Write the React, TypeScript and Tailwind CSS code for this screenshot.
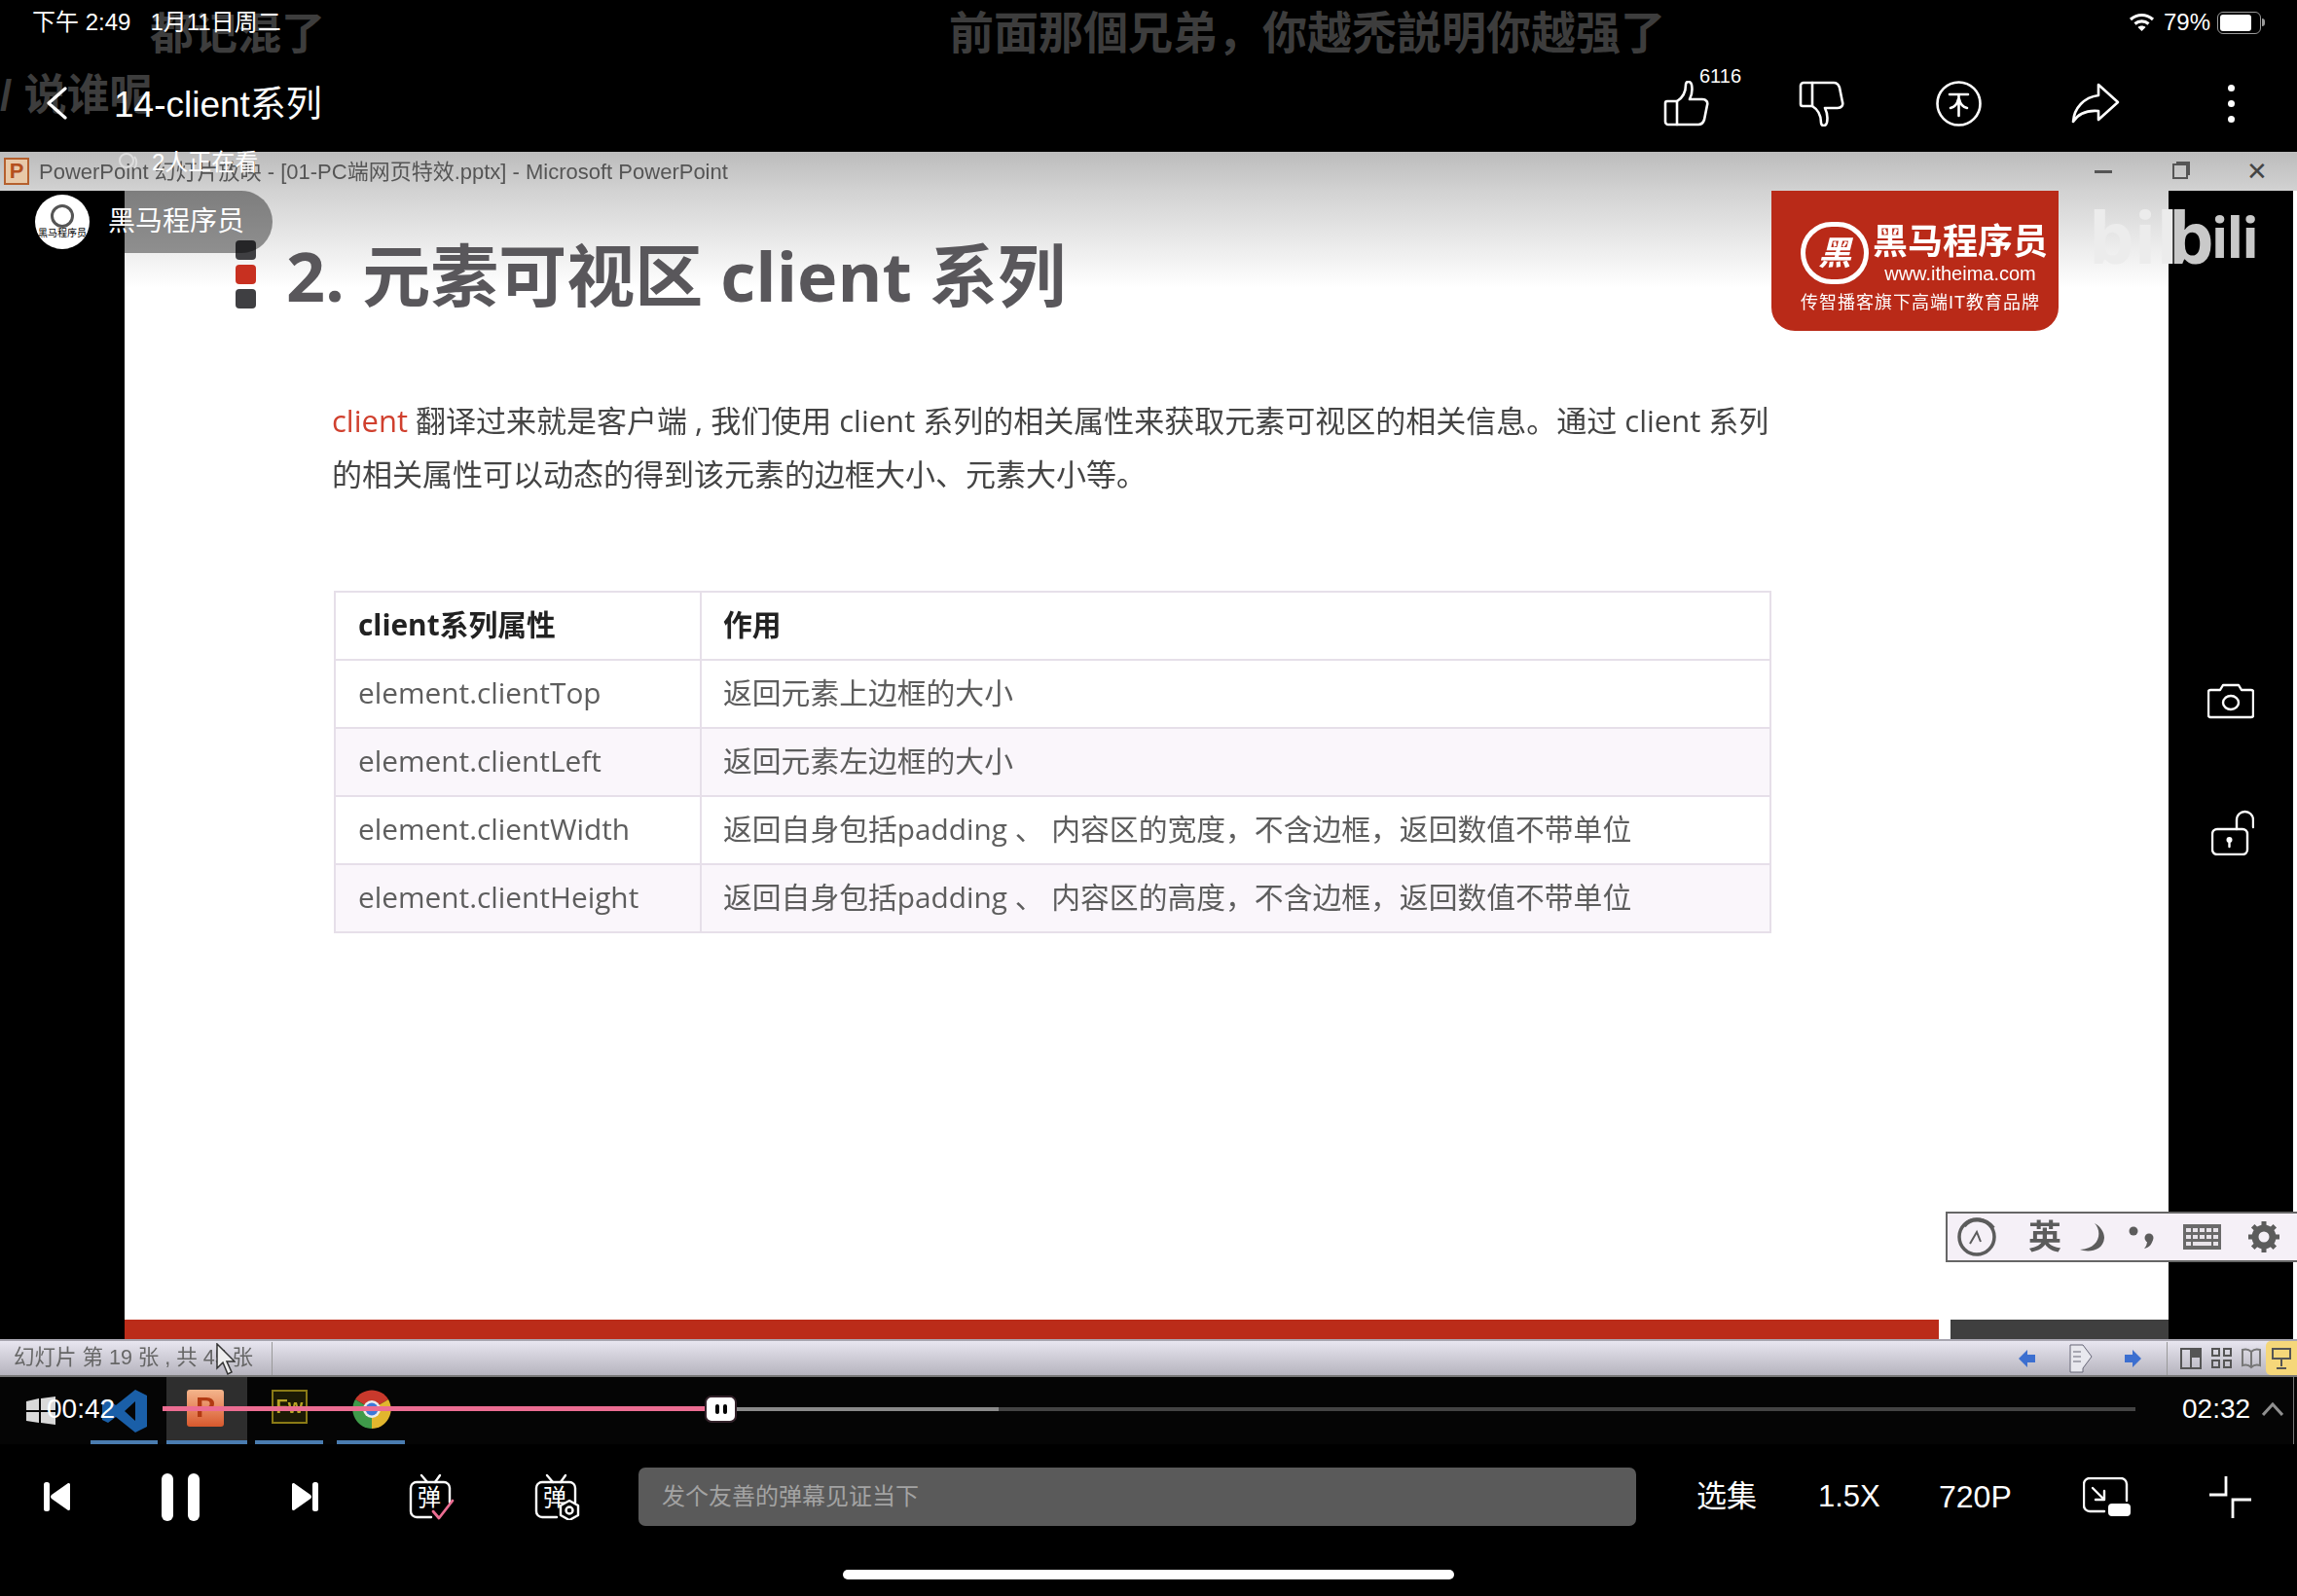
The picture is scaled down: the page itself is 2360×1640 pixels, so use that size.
const rows = [
  { name: 'element.clientTop', desc: '返回元素上边框的大小', tint: false },
  { name: 'element.clientLeft', desc: '返回元素左边框的大小', tint: true },
  { name: 'element.clientWidth', desc: '返回自身包括padding 、 内容区的宽度，不含边框，返回数值不带单位', tint: false },
  { name: 'element.clientHeight', desc: '返回自身包括padding 、 内容区的高度，不含边框，返回数值不带单位', tint: true },
];

function Like({ flip = false }: { flip?: boolean }) {
  return (
    <svg width="47" height="47" viewBox="0 0 47 47" fill="none" stroke="white" strokeWidth="2.6" strokeLinejoin="round" strokeLinecap="round" className={flip ? '-scale-y-100' : ''}>
      <path d="M4 21h10v24H5a3 3 0 0 1-3-3V23a2 2 0 0 1 2-2z" />
      <path d="M14 21c5-3 9-9 9-17 0-4 5-4 6 0 1 5 0 11-2 15h13c4 0 6 3 5 6l-3 15c-1 3-3 5-6 5H14" />
    </svg>
  );
}

function Coin() {
  return (
    <svg width="47" height="47" viewBox="0 0 47 47" fill="none" stroke="white" strokeWidth="2.6" strokeLinecap="round">
      <circle cx="23.5" cy="23.5" r="22" />
      <path d="M14 14h19M23.5 14v22M23 19c-1 5-4 8-8 9M24 19c1 5 4 8 8 9" />
    </svg>
  );
}

function Share() {
  return (
    <svg width="50" height="42" viewBox="0 0 50 42" fill="none" stroke="white" strokeWidth="2.6" strokeLinejoin="round">
      <path d="M28 2l20 18-20 18V29C16 28 7 32 2 40c1-14 11-25 26-27z" />
    </svg>
  );
}

function Wifi() {
  return (
    <svg width="27" height="20" viewBox="0 0 27 20" fill="none" stroke="white" strokeWidth="3.2">
      <path d="M2 7c7-6 16-6 23 0M6.500 11.500c4-3.500 10-3.500 14 0" />
      <path d="M13.500 19l-4-4c2-2 6-2 8 0z" fill="white" stroke="none" />
    </svg>
  );
}

function DanmakuIcon({ glyph, badge }: { glyph: string; badge: 'check' | 'gear' }) {
  return (
    <div className="relative w-[48px] h-[48px]">
      <svg width="48" height="48" viewBox="0 0 48 48" fill="none" stroke="white" strokeWidth="2.4" strokeLinecap="round" strokeLinejoin="round">
        <path d="M14 2l6 7M33 2l-5 7" />
        <path d="M24 45H9a6 6 0 0 1-6-6V15a6 6 0 0 1 6-6h28a6 6 0 0 1 6 6v15" />
        {badge === 'check' ? (
          <path d="M26 39l6 7 14-18" stroke="#ec6d92" strokeWidth="2.8" />
        ) : (
          <>
            <path d="M37 28l9 5v10l-9 5-9-5V33z" fill="black" />
            <circle cx="37" cy="38" r="3.500" />
          </>
        )}
      </svg>
      <span className="absolute left-[10px] top-[11px] text-[24px] leading-[28px] text-white">{glyph}</span>
    </div>
  );
}

function TaskIcons() {
  return (
    <div className="absolute inset-0 flex blur-[0.5px]">
      <div className="w-[93px] pl-[27px] pt-[20px]">
        <svg width="30" height="29" viewBox="0 0 30 29" fill="#d9d9d9">
          <path d="M0 5l13-3v12H0zM15 2l15-2v14H15zM0 16h13v11L0 25zM15 16h15v13l-15-2z" />
        </svg>
      </div>
      <div className="w-[78px] pl-[12px] pt-[13px] relative">
        <svg width="46" height="44" viewBox="0 0 46 44">
          <path d="M34 0l12 6v32l-12 6-20-16-8 6-6-3V13l6-3 8 6zM34 12l-11 10 11 10z" fill="#1a5fa8" />
        </svg>
        <div className="absolute left-0 right-[9px] bottom-0 h-[4px] bg-[#4a7cb0]" />
      </div>
      <div className="w-[83px] bg-[#2e2e2e] relative pl-[21px] pt-[13px]">
        <div className="w-[38px] h-[38px] rounded-[3px] bg-gradient-to-b from-[#f3b58c] to-[#d7582c] text-[#b23a12] font-bold text-[30px] leading-[36px] text-center">P</div>
        <div className="absolute left-0 right-0 bottom-0 h-[4px] bg-[#4a7cb0]" />
      </div>
      <div className="w-[92px] relative pl-[25px] pt-[13px]">
        <div className="w-[37px] h-[35px] border-2 border-[#8a7a16] bg-[#1c1a04] text-[#b8a326] font-bold text-[20px] leading-[30px] text-center">Fw</div>
        <div className="absolute left-[8px] w-[70px] bottom-0 h-[4px] bg-[#4a7cb0]" />
      </div>
      <div className="relative pl-[16px] pt-[13px] w-[70px]">
        <svg width="40" height="40" viewBox="0 0 40 40">
          <path d="M20 20L3 10A20 20 0 0 1 37 10z" fill="#c9392c" />
          <path d="M20 20L3 10A20 20 0 0 0 20 40z" fill="#3f9a4a" />
          <path d="M20 20L37 10A20 20 0 0 1 20 40z" fill="#e2b62e" />
          <circle cx="20" cy="20" r="9" fill="#ececec" />
          <circle cx="20" cy="20" r="6.500" fill="#3d78d8" />
        </svg>
        <div className="absolute left-0 right-0 bottom-0 h-[4px] bg-[#4a7cb0]" />
      </div>
    </div>
  );
}

function Slide() {
  return (
    <div className="flex-1 flex flex-col bg-[linear-gradient(#d2d2d2,#ffffff_100px)] text-[#444]">
      <div className="h-[144px] flex items-start blur-[0.6px]">
        <div className="flex-1 flex items-start pl-[114px]">
          <div className="flex flex-col gap-[5px] mt-[51px]">
            <div className="w-[21px] h-[20px] rounded-[4px] bg-[#3f3f42]" />
            <div className="w-[21px] h-[20px] rounded-[4px] bg-[#c83020]" />
            <div className="w-[21px] h-[20px] rounded-[4px] bg-[#3f3f42]" />
          </div>
          <h1 className="ml-[31px] mt-[42px] text-[70px] leading-[90px] font-bold text-[#59575b] whitespace-nowrap font-['Open_Sans','Noto_Sans_CJK_SC',sans-serif]">
            2. 元素可视区 client 系列
          </h1>
        </div>
        <div className="w-[295px] h-[144px] mr-[113px] rounded-b-[24px] bg-[#b92a18] flex flex-col pl-[30px] text-white">
          <div className="flex items-start mt-[32px]">
            <div className="w-[70px] h-[64px] rounded-full border-[5px] border-white flex items-center justify-center text-[34px] font-bold italic shrink-0">黑</div>
            <div className="flex flex-col items-center ml-[2px] w-[184px]">
              <span className="text-[36px] leading-[42px] font-bold whitespace-nowrap">黑马程序员</span>
              <span className="text-[20px] leading-[22px] font-['Liberation_Sans',sans-serif]">www.itheima.com</span>
            </div>
          </div>
          <span className="text-[18px] leading-[20px] mt-[9px] tracking-[1px] whitespace-nowrap">传智播客旗下高端IT教育品牌</span>
        </div>
      </div>

      <p className="mt-[65px] ml-[213px] w-[1490px] text-[31px] leading-[55px] whitespace-nowrap blur-[0.5px] font-['Open_Sans','Noto_Sans_CJK_SC',sans-serif]">
        <span className="text-[#d0402e]">client</span> 翻译过来就是客户端 , 我们使用 client 系列的相关属性来获取元素可视区的相关信息。通过 client 系列
        <br />
        的相关属性可以动态的得到该元素的边框大小、元素大小等。
      </p>

      <div className="mt-[92px] ml-[215px] w-[1477px] border-2 border-[#e6dfe9] text-[29.8px] text-[#5d5d5d] font-['Open_Sans','Noto_Sans_CJK_SC',sans-serif]">
        <div className="grid grid-cols-[376px_1fr] h-[68px] items-stretch font-bold text-[#222]">
          <div className="pl-[23px] pb-[2px] flex items-center border-r-2 border-[#e6dfe9] blur-[0.4px]">client系列属性</div>
          <div className="pl-[22px] pb-[2px] flex items-center blur-[0.4px]">作用</div>
        </div>
        {rows.map(r => (
          <div key={r.name} className={`grid grid-cols-[376px_1fr] h-[70px] border-t-2 border-[#e6dfe9] ${r.tint ? 'bg-[#faf6fb]' : 'bg-white'}`}>
            <div className="pl-[23px] pb-[2px] flex items-center border-r-2 border-[#e6dfe9]"><span className="blur-[0.4px]">{r.name}</span></div>
            <div className="pl-[22px] pb-[2px] flex items-center whitespace-nowrap"><span className="blur-[0.4px]">{r.desc}</span></div>
          </div>
        ))}
      </div>

      <div className="flex-1" />
      <div className="h-[20px] flex gap-[12px]">
        <div className="w-[1864px] bg-[#bb2c19]" />
        <div className="flex-1 bg-[#3f3f3f]" />
      </div>
    </div>
  );
}

function ImeBar() {
  return (
    <div className="absolute right-0 top-[1245px] w-[361px] h-[52px] border-2 border-r-0 border-[#666] bg-[#f5f0f7] flex items-center pl-[9px] text-[#5c5c5c] blur-[0.4px]">
      <svg width="44" height="42" viewBox="0 0 44 42" fill="none" stroke="#5c5c5c">
        <circle cx="21" cy="21" r="18" strokeWidth="3.500" />
        <path d="M14 28l7-12 4 10" strokeWidth="2" />
        <path d="M8 10C14 1 30 1 38 12" strokeWidth="4" />
      </svg>
      <span className="ml-[30px] text-[34px] leading-none font-bold">英</span>
      <svg className="ml-[17px]" width="28" height="30" viewBox="0 0 28 30" fill="#5c5c5c">
        <path d="M17 1c8 8 6 26-15 27 8 3 24 2 25-12 0-6-4-12-10-15z" />
      </svg>
      <svg className="ml-[23px]" width="28" height="28" viewBox="0 0 28 28" fill="#5c5c5c">
        <circle cx="6" cy="8" r="4.500" />
        <circle cx="22" cy="15" r="4.500" />
        <path d="M26 15c0 6-4 10-9 11 2-2 3-5 3-8z" />
      </svg>
      <svg className="ml-[29px]" width="39" height="26" viewBox="0 0 39 26">
        <rect width="39" height="26" fill="#6a6a6a" />
        <path d="M3 4h5v4H3zM10 4h5v4h-5zM17 4h5v4h-5zM24 4h5v4h-5zM31 4h5v4h-5zM3 11h5v4H3zM10 11h5v4h-5zM17 11h5v4h-5zM24 11h5v4h-5zM31 11h5v4h-5zM3 18h5v4H3zM10 18h19v4H10zM31 18h5v4h-5z" fill="#e8e4ea" />
      </svg>
      <svg className="ml-[27px]" width="34" height="34" viewBox="0 0 34 34" fill="none" stroke="#5c5c5c">
        <circle cx="17" cy="17" r="9" strokeWidth="7" />
        <path d="M17 1v6M17 27v6M1 17h6M27 17h6M5.700 5.700l4.300 4.300M24 24l4.300 4.300M5.700 28.300l4.300-4.300M24 10l4.300-4.300" strokeWidth="5" />
      </svg>
    </div>
  );
}

export default function App() {
  return (
    <div className="relative w-[2360px] h-[1640px] overflow-hidden bg-black text-white font-['Liberation_Sans','Noto_Sans_CJK_SC',sans-serif]">
      {/* top bar */}
      <div className="relative h-[156px]">
        <div className="absolute left-[154px] top-[8px] text-[45px] leading-[56px] font-bold text-[#3d3d3d] whitespace-nowrap">都记混了</div>
        <div className="absolute left-[975px] top-[6px] text-[46px] leading-[56px] font-bold text-[#3d3d3d] whitespace-nowrap">前面那個兄弟，你越禿説明你越强了</div>
        <div className="absolute left-0 top-[70px] text-[44px] leading-[56px] font-bold text-[#3d3d3d] whitespace-nowrap">/ 说谁呢</div>

        <div className="relative h-[46px] flex items-center pl-[33px] pr-[33px] text-[24px]">
          <span>下午 2:49</span>
          <span className="ml-[20px]">1月11日周二</span>
          <div className="flex-1" />
          <Wifi />
          <span className="ml-[9px]">79%</span>
          <div className="ml-[7px] w-[45px] h-[23px] rounded-[6px] border border-[#9a9a9a] p-[2px]">
            <div className="w-[32px] h-full rounded-[3px] bg-white" />
          </div>
          <div className="w-[3px] h-[8px] bg-[#9a9a9a] rounded-r-sm ml-[1px]" />
        </div>

        <div className="relative h-[110px] pt-[10px] flex items-center">
          <svg className="ml-[47px]" width="22" height="34" viewBox="0 0 22 34" fill="none" stroke="white" strokeWidth="3.200" strokeLinecap="round" strokeLinejoin="round">
            <path d="M20 2L3 17l17 15" />
          </svg>
          <span className="ml-[48px] mt-[3px] text-[37px] leading-none whitespace-nowrap">14-client系列</span>
          <div className="flex-1" />
          <div className="relative">
            <Like />
            <span className="absolute left-[37px] top-[-15px] text-[20px] leading-none">6116</span>
          </div>
          <div className="ml-[92px]"><Like flip /></div>
          <div className="ml-[94px]"><Coin /></div>
          <div className="ml-[92px]"><Share /></div>
          <div className="ml-[111px] mr-[64px] flex flex-col gap-[9px]">
            <div className="w-[7px] h-[7px] rounded-full bg-white" />
            <div className="w-[7px] h-[7px] rounded-full bg-white" />
            <div className="w-[7px] h-[7px] rounded-full bg-white" />
          </div>
        </div>
      </div>

      {/* video frame */}
      <div className="h-[1328px] flex flex-col">
        <div className="h-[40px] bg-gradient-to-b from-[#bcbcbc] to-[#d2d2d2] flex items-center text-[#555] text-[22px] pl-[4px] pr-[30px] whitespace-nowrap">
          <div className="w-[26px] h-[28px] bg-[#e8c9a8] border-2 border-[#b5602e] text-[#b5501e] font-bold text-[22px] leading-[24px] text-center">P</div>
          <span className="ml-[10px] blur-[0.4px]">PowerPoint 幻灯片放映 - [01-PC端网页特效.pptx] - Microsoft PowerPoint</span>
          <div className="flex-1" />
          <div className="w-[18px] h-[3px] bg-[#555]" />
          <div className="ml-[62px] w-[16px] h-[16px] border-2 border-[#555] shadow-[3px_-3px_0_-1px_#555]" />
          <span className="ml-[60px] text-[26px] leading-none text-[#444]">✕</span>
        </div>

        <div className="h-[1180px] flex">
          <div className="w-[128px] bg-black" />
          <Slide />
          <div className="w-[128px] bg-black flex flex-col items-center">
            <svg className="mt-[506px]" width="48" height="37" viewBox="0 0 48 37" fill="none" stroke="white" strokeWidth="2.400" strokeLinejoin="round">
              <path d="M3 7h10l3-5h16l3 5h10a2 2 0 0 1 2 2v24a2 2 0 0 1-2 2H3a2 2 0 0 1-2-2V9a2 2 0 0 1 2-2z" />
              <ellipse cx="24" cy="20" rx="8" ry="7" />
            </svg>
            <svg className="mt-[93px] ml-[3px]" width="44" height="47" viewBox="0 0 44 47" fill="none" stroke="white" strokeWidth="2.400" strokeLinecap="round">
              <path d="M6 20h26a5 5 0 0 1 5 5v16a5 5 0 0 1-5 5H6a5 5 0 0 1-5-5V25a5 5 0 0 1 5-5z" />
              <path d="M26 20v-9c0-12 17-12 17 0v7" />
              <circle cx="18.500" cy="31" r="3" fill="white" stroke="none" />
              <path d="M18.500 32v6" />
            </svg>
          </div>
          <div className="w-[4px] bg-white" />
        </div>

        <div className="h-[39px] flex items-center bg-gradient-to-b from-[#e8e6f0] to-[#b6b4be] border-t-2 border-b-2 border-t-[#a8a6b0] border-b-[#777] text-[#666] text-[21.5px] whitespace-nowrap pl-[14px]">
          <span className="w-[265px] blur-[0.4px]">幻灯片 第 19 张 , 共 45 张</span>
          <div className="w-[1px] h-[34px] bg-[#999]" />
          <div className="flex-1" />
          <svg width="17" height="20" viewBox="0 0 17 20" fill="#3c6fd0"><path d="M0 10l9-9v5h8v8H9v5z" /></svg>
          <svg className="ml-[35px]" width="25" height="30" viewBox="0 0 25 30" fill="#e8e8ee" stroke="#667">
            <path d="M1 1h13l9 12-9 12v4H1z" />
            <path d="M4 8h8M4 13h8M4 18h8" />
          </svg>
          <svg className="ml-[32px]" width="17" height="20" viewBox="0 0 17 20" fill="#3c6fd0"><path d="M17 10l-9-9v5H0v8h8v5z" /></svg>
          <div className="ml-[26px] w-[1px] h-[34px] bg-[#999]" />
          <svg className="ml-[13px]" width="22" height="22" viewBox="0 0 22 22" fill="none" stroke="#555" strokeWidth="2"><path d="M1 1h20v20H1zM11 1v20" /><path d="M13 3h6v6h-6z" fill="#555" /></svg>
          <svg className="ml-[10px]" width="21" height="21" viewBox="0 0 21 21" fill="none" stroke="#555" strokeWidth="2"><path d="M1 1h7v7H1zM13 1h7v7h-7zM1 13h7v7H1zM13 13h7v7h-7z" /></svg>
          <svg className="ml-[10px]" width="20" height="24" viewBox="0 0 20 24" fill="none" stroke="#777" strokeWidth="2"><path d="M10 5C7 2 4 2 1 3v16c3-1 6-1 9 2 3-3 6-3 9-2V3c-3-1-6-1-9 2zM10 5v16" /></svg>
          <div className="ml-[5px] w-[32px] h-[35px] rounded-l-[5px] bg-[#f5d77a] flex items-center justify-center">
            <svg width="22" height="24" viewBox="0 0 22 24" fill="none" stroke="#555" strokeWidth="2"><path d="M2 2h18v10H2zM11 12v8M6 22h10" /></svg>
          </div>
        </div>

        <div className="relative h-[69px] bg-[#050505]">
          <TaskIcons />
          <div className="absolute right-[3px] top-0 bottom-0 w-[1px] bg-[#777]" />
          <div className="absolute inset-0 flex items-center pl-[48px] pb-[4px]">
            <span className="w-[119px] text-[28px] leading-none">00:42</span>
            <div className="w-[557px] h-[5px] bg-[#ec6d92]" />
            <div className="w-[33px] h-[28px] rounded-[7px] bg-white border-2 border-[#33222a] flex items-center justify-center gap-[4px]">
              <div className="w-[4px] h-[10px] rounded-sm bg-black" />
              <div className="w-[4px] h-[10px] rounded-sm bg-black" />
            </div>
            <div className="w-[269px] h-[4px] bg-[#8a8a8a]" />
            <div className="w-[1168px] h-[4px] bg-[#444]" />
            <span className="ml-[48px] text-[28px] leading-none">02:32</span>
            <svg className="ml-[12px]" width="22" height="14" viewBox="0 0 22 14" fill="none" stroke="#8f8f8f" strokeWidth="3"><path d="M1 13L11 2l10 11" /></svg>
          </div>
        </div>
      </div>

      {/* bottom controls */}
      <div className="h-[108px] flex items-center pl-[45px]">
        <svg width="27" height="30" viewBox="0 0 27 30" fill="white"><rect width="6" height="30" rx="2.500" /><path d="M25 1a1.500 1.500 0 0 1 2 1.500v25a1.500 1.500 0 0 1-2 1.500L8 17a2.500 2.500 0 0 1 0-4z" /></svg>
        <div className="ml-[94px] flex gap-[15px]">
          <div className="w-[12px] h-[49px] rounded-full bg-white" />
          <div className="w-[12px] h-[49px] rounded-full bg-white" />
        </div>
        <svg className="ml-[95px]" width="27" height="30" viewBox="0 0 27 30" fill="white"><rect x="21" width="6" height="30" rx="2.500" /><path d="M2 1a1.500 1.500 0 0 0-2 1.500v25a1.500 1.500 0 0 0 2 1.500L19 17a2.500 2.500 0 0 0 0-4z" /></svg>
        <div className="ml-[92px]"><DanmakuIcon glyph="弹" badge="check" /></div>
        <div className="ml-[81px]"><DanmakuIcon glyph="弹" badge="gear" /></div>
        <div className="ml-[60px] w-[1025px] h-[60px] rounded-[7px] bg-[#5a5a5a] flex items-center pl-[24px] text-[24px] text-[#a3a3a3]">发个友善的弹幕见证当下</div>
        <span className="ml-[62px] w-[125px] text-[31px]">选集</span>
        <span className="w-[124px] text-[31px]">1.5X</span>
        <span className="w-[148px] text-[32px]">720P</span>
        <div className="w-[130px]">
          <svg width="50" height="40" viewBox="0 0 50 40" fill="none" stroke="white" strokeWidth="2.400" strokeLinecap="round" strokeLinejoin="round">
            <path d="M22 35H7a6 6 0 0 1-6-6V7a6 6 0 0 1 6-6h32a6 6 0 0 1 6 6v17" />
            <path d="M10 11l12 12M22 14v9h-9" />
            <rect x="26" y="27" width="23" height="13" rx="4" fill="white" stroke="none" />
          </svg>
        </div>
        <svg width="43" height="43" viewBox="0 0 43 43" fill="none" stroke="white" strokeWidth="2.800">
          <path d="M17 0v19H0M43 24H24v19" />
        </svg>
      </div>
      <div className="h-[48px] flex justify-center pt-[21px]">
        <div className="w-[628px] h-[10px] rounded-full bg-white" />
      </div>

      {/* overlays on the video */}
      <div className="absolute left-[120px] top-[154px] flex items-center text-[24px] leading-[26px] text-white whitespace-nowrap">
        <svg width="24" height="24" viewBox="0 0 24 24" fill="none" stroke="#ddd" strokeWidth="2"><circle cx="10" cy="10" r="7" /><path d="M18 6c3 3 3 8 0 12" /></svg>
        <span className="ml-[12px]">2人正在看</span>
      </div>
      <div className="absolute left-0 top-[196px] w-[280px] h-[64px] rounded-r-full bg-black/40 flex items-center pl-[36px]">
        <div className="w-[56px] h-[56px] rounded-full bg-white flex flex-col items-center justify-center text-black overflow-hidden">
          <div className="w-[24px] h-[24px] rounded-full border-[3px] border-[#555]" />
          <span className="text-[10px] leading-[12px] whitespace-nowrap">黑马程序员</span>
        </div>
        <span className="ml-[19px] text-[28px] leading-none whitespace-nowrap">黑马程序员</span>
      </div>
      <div className="absolute left-[2146px] top-[190px] h-[90px] flex items-end font-bold leading-none whitespace-nowrap font-['Open_Sans',sans-serif]">
        <span className="w-[82px] text-[74px] text-[#ececec]">bil</span>
        <span className="text-[#c9c9c9] text-[74px] tracking-[-3px]">b</span>
        <span className="text-[#c9c9c9] text-[58px] tracking-[-2px] mb-[8px]">ili</span>
      </div>
      <ImeBar />
      <svg className="absolute left-[222px] top-[1380px]" width="20" height="34" viewBox="0 0 20 34" fill="#eee" stroke="#333" strokeWidth="1.500">
        <path d="M1 1v25l6-6 5 12 4-2-5-11h8z" />
      </svg>
    </div>
  );
}
